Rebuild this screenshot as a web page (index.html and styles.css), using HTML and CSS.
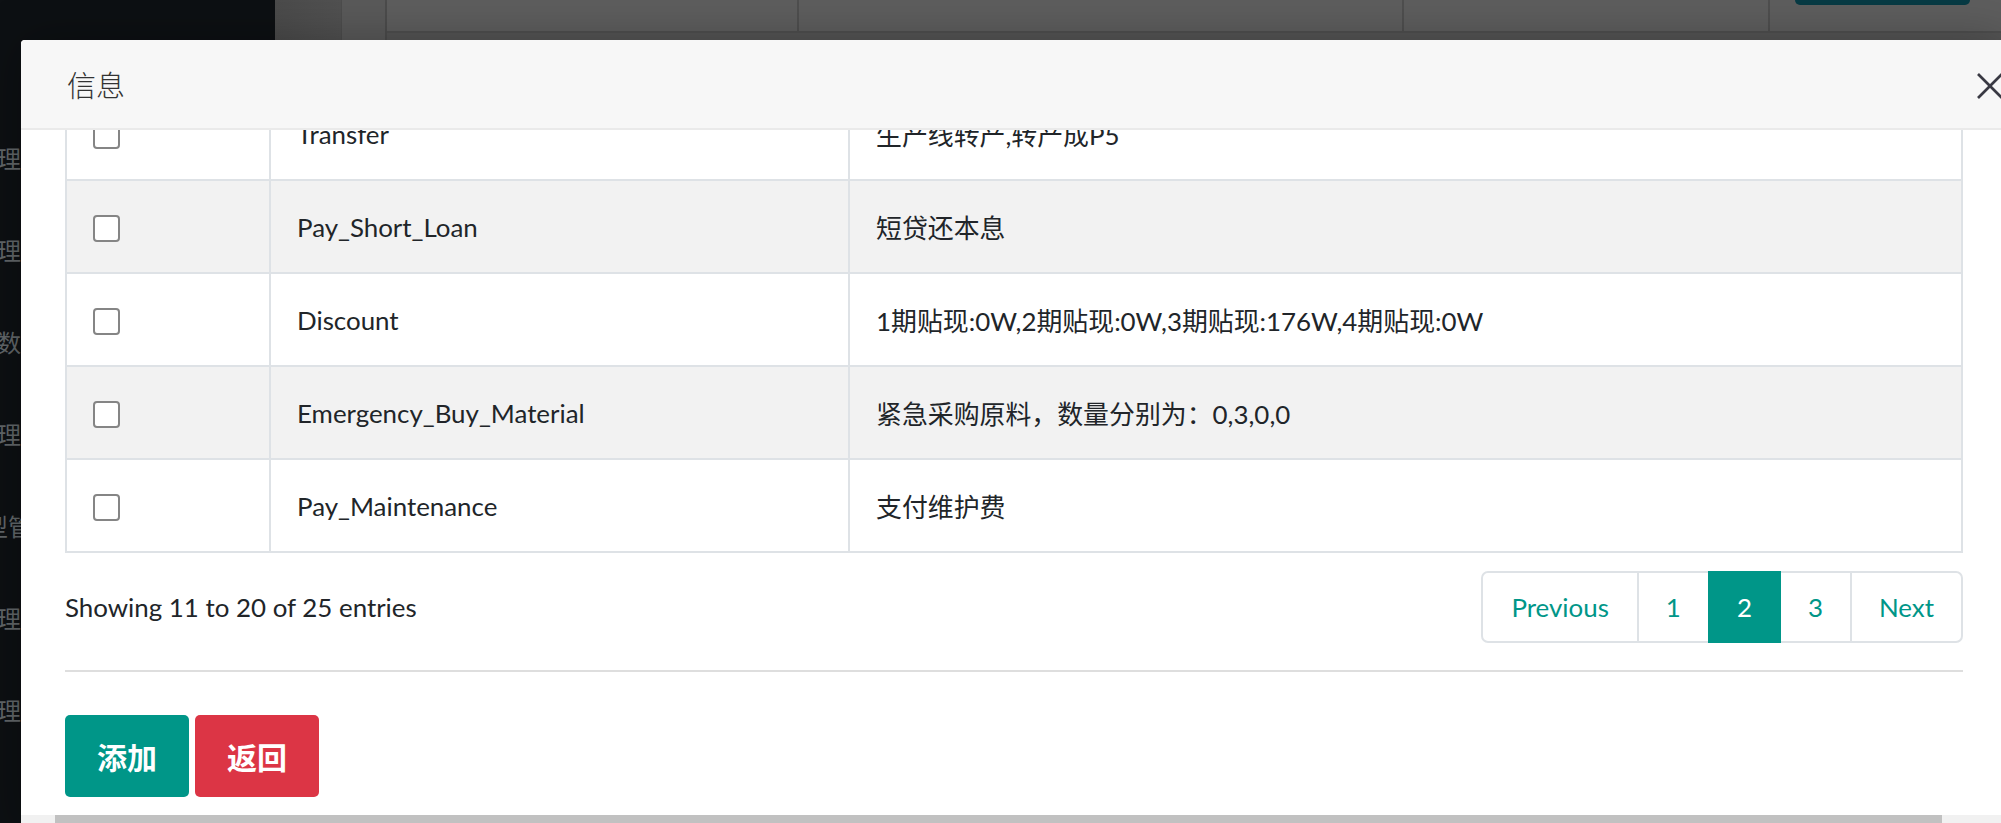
FILE: index.html
```html
<!DOCTYPE html>
<html lang="zh-CN">
<head>
    <meta charset="UTF-8">
    <meta name="viewport" content="width=device-width, initial-scale=1.0">
    <title>行动管理</title>
    <link rel="stylesheet" href="styles.css">
</head>
<body>

    <div class="app">
        <aside class="sidebar">
            <ul class="nav">
                <li><a href="#">用户管理</a></li>
                <li><a href="#">角色管理</a></li>
                <li><a href="#">系统参数</a></li>
                <li><a href="#">日志管理</a></li>
                <li class="nav-sub"><a href="#">模型管理</a></li>
                <li><a href="#">订单管理</a></li>
                <li><a href="#">比赛管理</a></li>
            </ul>
        </aside>

        <main class="main">
            <div class="main-gutter"></div>
            <div class="main-side"></div>
            <div class="main-table">
                <div class="main-head">
                    <div class="cell cell-a"></div>
                    <div class="cell cell-b"></div>
                    <div class="cell cell-c"></div>
                    <div class="cell cell-d"><span class="ghost-btn"></span></div>
                </div>
            </div>
        </main>
    </div>

    <!-- finestra modale -->
    <div class="layer">
        <div class="layer-title">
            <span>信息</span>
            <svg class="layer-close" width="26" height="26" viewBox="0 0 26 26">
                <line x1="1" y1="1" x2="25" y2="25" stroke="#393943" stroke-width="2.6"/>
                <line x1="25" y1="1" x2="1" y2="25" stroke="#393943" stroke-width="2.6"/>
            </svg>
        </div>

        <div class="layer-body">
            <table class="data-table">
                <colgroup>
                    <col class="col-check">
                    <col class="col-name">
                    <col>
                </colgroup>
                <tbody>
                    <tr>
                        <td><input type="checkbox"></td>
                        <td>Transfer</td>
                        <td>生产线转产,转产成P5</td>
                    </tr>
                    <tr>
                        <td><input type="checkbox"></td>
                        <td>Pay_Short_Loan</td>
                        <td>短贷还本息</td>
                    </tr>
                    <tr>
                        <td><input type="checkbox"></td>
                        <td>Discount</td>
                        <td>1期贴现:0W,2期贴现:0W,3期贴现:176W,4期贴现:0W</td>
                    </tr>
                    <tr>
                        <td><input type="checkbox"></td>
                        <td>Emergency_Buy_Material</td>
                        <td>紧急采购原料，数量分别为：0,3,0,0</td>
                    </tr>
                    <tr>
                        <td><input type="checkbox"></td>
                        <td>Pay_Maintenance</td>
                        <td>支付维护费</td>
                    </tr>
                </tbody>
            </table>

            <div class="table-foot">
                <div class="table-info">Showing 11 to 20 of 25 entries</div>
                <ul class="pagination">
                    <li><a href="#">Previous</a></li>
                    <li><a href="#">1</a></li>
                    <li class="active"><a href="#">2</a></li>
                    <li><a href="#">3</a></li>
                    <li><a href="#">Next</a></li>
                </ul>
            </div>

            <hr class="divider">

            <div class="actions">
                <button type="button" class="btn btn-add">添加</button>
                <button type="button" class="btn btn-back">返回</button>
            </div>
        </div>

        <div class="layer-scroll"><div class="layer-thumb"></div></div>
    </div>

</body>
</html>
```

FILE: styles.css
```css
* {
    box-sizing: border-box;
}

body {
    margin: 0;
    height: 823px;
    overflow: hidden;
    background-color: #555;
    font-family: Lato, "Noto Sans CJK SC", sans-serif;
    color: #212529;
}

.app {
    display: flex;
    height: 823px;
}

/* menu laterale (sotto la maschera) */
.sidebar {
    flex: none;
    width: 275px;
    background-color: #0d1013;
    overflow: hidden;
}

.nav {
    list-style: none;
    margin: 0 0 0 -75px;
    padding: 112px 0 0 0;
}

.nav li {
    height: 92px;
    line-height: 92px;
    font-size: 24px;
    white-space: nowrap;
}

.nav a {
    color: #62676a;
    text-decoration: none;
    font-family: "Noto Sans CJK SC", sans-serif;
}

.nav-sub a {
    padding-left: 35px;
}

.main {
    flex: 1;
    display: flex;
}

.main-gutter {
    width: 66px;
    background: linear-gradient(90deg, #4b4b4b, #515151);
}

.main-side {
    width: 46px;
    background-color: #5a5a5a;
    border-left: 1px solid #4d4d4d;
    border-right: 2px solid #4c4c4c;
}

.main-table {
    flex: 1;
}

.main-head {
    display: flex;
    height: 33px;
    background-color: #5e5e5e;
    border-bottom: 2px solid #4f4f4f;
}

.main-head .cell {
    border-right: 2px solid #4f4f4f;
}

.cell-a { width: 412px; }
.cell-b { width: 605px; }
.cell-c { width: 366px; }
.cell-d { flex: 1; border-right: none !important; }

.ghost-btn {
    display: block;
    width: 175px;
    height: 5px;
    margin-left: 25px;
    background-color: #073a44;
    border-radius: 0 0 6px 6px;
}

/* modale */
.layer {
    position: absolute;
    left: 21px;
    top: 40px;
    width: 1986px;
    height: 792px;
    background-color: #fff;
    border-radius: 4px 4px 0 0;
    display: flex;
    flex-direction: column;
    overflow: hidden;
    box-shadow: 1px 1px 50px rgba(0, 0, 0, 0.3);
}

.layer-title {
    flex: none;
    height: 90px;
    display: flex;
    align-items: center;
    padding: 0 4px 0 46px;
    background-color: #f7f7f7;
    border-bottom: 2px solid #eaeaea;
    font-family: "Noto Sans CJK SC", sans-serif;
    font-weight: 300;
    font-size: 29px;
    color: #333;
    position: relative;
    z-index: 2;
}

.layer-close {
    margin-left: auto;
    margin-top: 4px;
}

.layer-body {
    flex: 1;
    overflow: hidden;
    padding: 0 44px;
}

.data-table {
    width: 100%;
    margin-top: -44px;
    border-collapse: separate;
    border-spacing: 0;
    table-layout: fixed;
    border-right: 2px solid #dee2e6;
    border-bottom: 2px solid #dee2e6;
    font-size: 25.9px;
}

.col-check { width: 204px; }
.col-name { width: 579px; }

.data-table td {
    height: 93px;
    padding: 0 26px;
    border-top: 2px solid #dee2e6;
    border-left: 2px solid #dee2e6;
    vertical-align: middle;
    white-space: nowrap;
}

.data-table tr:nth-child(even) td {
    background-color: #f2f2f2;
}

.data-table input[type="checkbox"] {
    appearance: none;
    display: block;
    width: 27px;
    height: 27px;
    margin: 4px 0 0 0;
    border: 2px solid #858585;
    border-radius: 4px;
    background-color: #fff;
}

.table-foot {
    display: flex;
    justify-content: space-between;
    align-items: center;
    margin-top: 18px;
    font-size: 25.9px;
}

.pagination {
    display: flex;
    list-style: none;
    margin: 0;
    padding: 0;
}

.pagination a {
    display: flex;
    align-items: center;
    height: 72px;
    padding: 0 27px;
    margin-left: -2px;
    border: 2px solid #dee2e6;
    color: #009688;
    text-decoration: none;
    background-color: #fff;
    position: relative;
}

.pagination li:first-child a {
    margin-left: 0;
    padding: 0 28px;
    border-radius: 7px 0 0 7px;
}

.pagination li:last-child a {
    border-radius: 0 7px 7px 0;
}

.pagination .active a {
    background-color: #009688;
    border-color: #009688;
    color: #fff;
    z-index: 1;
}

.divider {
    margin: 27px 0 0 0;
    border: none;
    border-top: 2px solid #dedede;
}

.actions {
    display: flex;
    gap: 6px;
    margin-top: 43px;
}

.btn {
    height: 82px;
    padding: 0 32px;
    border: none;
    border-radius: 5px;
    color: #fff;
    font-family: "Liberation Serif", "Noto Sans CJK SC", serif;
    font-size: 30px;
    font-weight: bold;
    cursor: pointer;
}

.btn-add {
    background-color: #009688;
}

.btn-back {
    background-color: #dc3545;
}

.layer-scroll {
    flex: none;
    height: 17px;
    padding-left: 34px;
    background-color: #f1f1f1;
}

.layer-thumb {
    width: 1887px;
    height: 100%;
    background-color: #c1c1c1;
}
```
